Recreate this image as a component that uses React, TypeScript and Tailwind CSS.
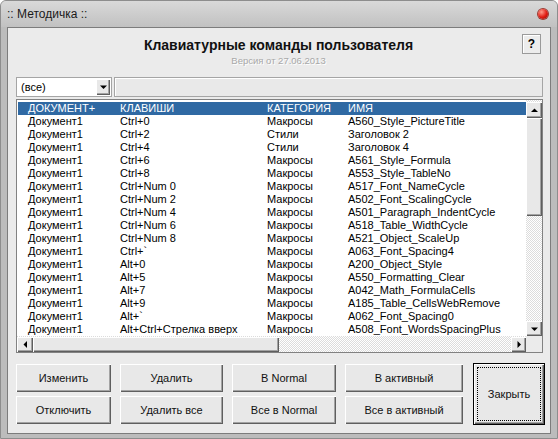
const rows: [string, string, string, string][] = [
  ["Документ1", "Ctrl+0", "Макросы", "A560_Style_PictureTitle"],
  ["Документ1", "Ctrl+2", "Стили", "Заголовок 2"],
  ["Документ1", "Ctrl+4", "Стили", "Заголовок 4"],
  ["Документ1", "Ctrl+6", "Макросы", "A561_Style_Formula"],
  ["Документ1", "Ctrl+8", "Макросы", "A553_Style_TableNo"],
  ["Документ1", "Ctrl+Num 0", "Макросы", "A517_Font_NameCycle"],
  ["Документ1", "Ctrl+Num 2", "Макросы", "A502_Font_ScalingCycle"],
  ["Документ1", "Ctrl+Num 4", "Макросы", "A501_Paragraph_IndentCycle"],
  ["Документ1", "Ctrl+Num 6", "Макросы", "A518_Table_WidthCycle"],
  ["Документ1", "Ctrl+Num 8", "Макросы", "A521_Object_ScaleUp"],
  ["Документ1", "Ctrl+`", "Макросы", "A063_Font_Spacing4"],
  ["Документ1", "Alt+0", "Макросы", "A200_Object_Style"],
  ["Документ1", "Alt+5", "Макросы", "A550_Formatting_Clear"],
  ["Документ1", "Alt+7", "Макросы", "A042_Math_FormulaCells"],
  ["Документ1", "Alt+9", "Макросы", "A185_Table_CellsWebRemove"],
  ["Документ1", "Alt+`", "Макросы", "A062_Font_Spacing0"],
  ["Документ1", "Alt+Ctrl+Стрелка вверх", "Макросы", "A508_Font_WordsSpacingPlus"],
];

// classic 3D raised look
const raised =
  "bg-[#e8e8e8] shadow-[inset_1px_1px_0_#ffffff,inset_-1px_-1px_0_#5f5f5f,inset_-2px_-2px_0_#a3a3a3]";

// dithered scrollbar track
const track = "bg-[repeating-conic-gradient(#ffffff_0_25%,#dcdcdc_0_50%)] bg-[length:2px_2px]";

const Arrow = ({ dir }: { dir: "up" | "down" | "left" | "right" }) => {
  const pts = {
    up: "0,4 7,4 3.5,0.5",
    down: "0,0.5 7,0.5 3.5,4",
    left: "4,0 4,7 0.5,3.5",
    right: "0.5,0 0.5,7 4,3.5",
  }[dir];
  const vertical = dir === "up" || dir === "down";
  return (
    <svg width={vertical ? 7 : 4} height={vertical ? 4 : 7} viewBox={vertical ? "0 0 7 4" : "0 0 4 7"}>
      <polygon points={pts} fill="#000" />
    </svg>
  );
};

const Btn = ({ label, w }: { label: string; w: string }) => (
  <div className={`${w} h-[28px] flex items-center justify-center text-[11px] text-[#111] ${raised}`}>
    {label}
  </div>
);

export default function App() {
  return (
    <div className="w-[558px] h-[439px] bg-[#bcbcbc] rounded-t-[6px] overflow-hidden font-['Liberation_Sans',Arial,sans-serif] border border-[#8d8d8d] flex flex-col">
      {/* title bar */}
      <div className="h-[26px] flex items-center justify-between pl-[6px] pr-[9px] bg-gradient-to-b from-[#d9d9d9] to-[#c1c1c1]">
        <span className="text-[12px] text-[#1a1a1a] leading-none">:: Методичка ::</span>
        <span className="w-[10px] h-[10px] rounded-full bg-[radial-gradient(circle_at_35%_30%,#ff9a8a,#e01b12_55%,#8e0a05)] shadow-[0_0_0_1px_#9a3a32]" />
      </div>

      {/* content panel */}
      <div className="ml-[6px] w-[544px] h-[407px] border border-[#7c7c7c] bg-[#ebebeb] pl-[8px] pt-[6px]">
        {/* header */}
        <div className="grid grid-cols-[1fr_auto_1fr] h-[43px] pr-[9px]">
          <div />
          <div className="flex flex-col items-center pt-[3px]">
            <div className="text-[14px] font-bold leading-[16px] text-[#111]">Клавиатурные команды пользователя</div>
            <div className="mt-[2px] text-[9.5px] leading-[11px] text-[#a8a8a8] [text-shadow:1px_1px_0_#ffffff]">
              Версия от 27.06.2013
            </div>
          </div>
          <div className="flex justify-end items-start">
            <div className="w-[19px] h-[20px] border border-[#9a9a9a] bg-[#ececec] shadow-[inset_1px_1px_0_#ffffff] flex items-center justify-center text-[12px] font-bold">
              ?
            </div>
          </div>
        </div>

        {/* filter row */}
        <div className="flex h-[20px] gap-[2px] w-[527px]">
          <div className="w-[96px] h-full bg-white border border-[#a5a5a5] flex items-center justify-between pl-[4px] pr-[1px]">
            <span className="text-[11px]">(все)</span>
            <div className={`w-[14px] h-[16px] flex items-center justify-center ${raised}`}>
              <Arrow dir="down" />
            </div>
          </div>
          <div className="flex-1 h-full bg-[#e9e9e9] border border-[#a5a5a5] shadow-[inset_1px_1px_0_#ffffff]" />
        </div>

        {/* list */}
        <div className="mt-[2px] w-[527px] h-[254px] border border-[#828282] bg-white flex">
          <div className="w-[509px] flex flex-col">
            <div className="h-[236px] overflow-hidden pl-[1px] pt-[2px] text-[11px] leading-[13px]">
              <div className="grid grid-cols-[92px_147px_81px_1fr] h-[13px] pl-[10px] bg-[#2f69a3] text-white items-center">
                <span>ДОКУМЕНТ+</span>
                <span>КЛАВИШИ</span>
                <span>КАТЕГОРИЯ</span>
                <span>ИМЯ</span>
              </div>
              {rows.map((r, i) => (
                <div key={i} className="grid grid-cols-[92px_147px_81px_1fr] h-[13px] pl-[10px] items-center text-black whitespace-nowrap">
                  <span>{r[0]}</span>
                  <span>{r[1]}</span>
                  <span>{r[2]}</span>
                  <span>{r[3]}</span>
                </div>
              ))}
            </div>
            {/* horizontal scrollbar */}
            <div className={`h-[16px] flex pt-[1px] ${track}`}>
              <div className={`w-[16px] h-[15px] flex items-center justify-center ${raised}`}>
                <Arrow dir="left" />
              </div>
              <div className={`w-[246px] h-[15px] ${raised}`} />
              <div className="flex-1" />
              <div className={`w-[15px] h-[15px] flex items-center justify-center ${raised}`}>
                <Arrow dir="right" />
              </div>
            </div>
          </div>
          {/* vertical scrollbar */}
          <div className="w-[16px] flex flex-col bg-[#ebebeb]">
            <div className={`h-[236px] flex flex-col pt-[2px] ${track}`}>
              <div className={`h-[16px] flex items-center justify-center ${raised}`}>
                <Arrow dir="up" />
              </div>
              <div className={`h-[98px] ${raised}`} />
              <div className="flex-1" />
              <div className={`h-[15px] flex items-center justify-center ${raised}`}>
                <Arrow dir="down" />
              </div>
            </div>
            <div className="flex-1" />
          </div>
        </div>

        {/* buttons */}
        <div className="mt-[10px] flex items-center gap-[10px]">
          <div className="grid grid-cols-[95px_103px_104px_118px] gap-x-[9px] gap-y-[4px]">
            <Btn label="Изменить" w="w-[95px]" />
            <Btn label="Удалить" w="w-[103px]" />
            <Btn label="В Normal" w="w-[104px]" />
            <Btn label="В активный" w="w-[118px]" />
            <Btn label="Отключить" w="w-[95px]" />
            <Btn label="Удалить все" w="w-[103px]" />
            <Btn label="Все в Normal" w="w-[104px]" />
            <Btn label="Все в активный" w="w-[118px]" />
          </div>
          <div className="w-[72px] h-[62px] border border-black p-[3px] bg-[#e8e8e8] shadow-[inset_1px_1px_0_#ffffff,inset_-1px_-1px_0_#5f5f5f,inset_-2px_-2px_0_#a3a3a3]">
            <div className="w-full h-full border border-dotted border-black flex items-center justify-center text-[11px] text-[#111]">
              Закрыть
            </div>
          </div>
        </div>
      </div>
    </div>
  );
}
